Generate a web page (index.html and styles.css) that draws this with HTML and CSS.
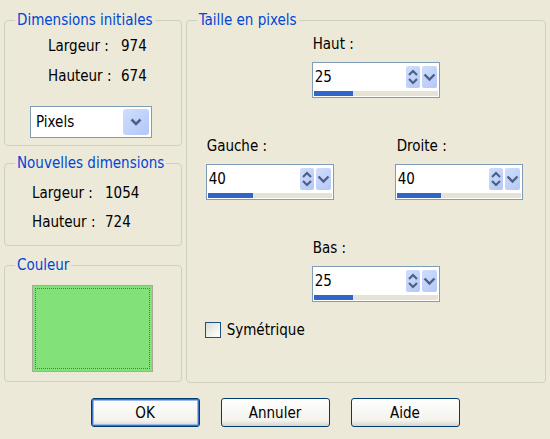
FILE: index.html
```html
<!DOCTYPE html>
<html lang="fr">
<head>
<meta charset="utf-8">
<title>Taille en pixels</title>
<link rel="stylesheet" href="styles.css">
</head>
<body>
<div class="dialog">
  <div class="main">
    <div class="left">
      <section class="group g-initial">
        <div class="group-title">Dimensions initiales</div>
        <div class="info info-initial">
          <span>Largeur :</span><span>974</span>
          <span>Hauteur :</span><span>674</span>
        </div>
        <div class="select">
          <span class="select-text">Pixels</span>
          <span class="select-btn"><svg width="26" height="26" viewBox="0 0 26 26"><path d="M8.5 10.5 L13 15 L17.5 10.5" fill="none" stroke="#4D6185" stroke-width="2.6"/></svg></span>
        </div>
      </section>
      <section class="group g-new">
        <div class="group-title">Nouvelles dimensions</div>
        <div class="info info-new">
          <span>Largeur :</span><span>1054</span>
          <span>Hauteur :</span><span>724</span>
        </div>
      </section>
      <section class="group g-color">
        <div class="group-title">Couleur</div>
        <div class="swatch"><div class="swatch-focus"></div></div>
      </section>
    </div>
    <section class="group g-size">
      <div class="group-title">Taille en pixels</div>
      <div class="row-center first">
        <div class="field">
          <div class="field-label">Haut :</div>
          <div class="spin">
            <div class="spin-top">
              <span class="spin-value">25</span>
              <span class="spin-btn"><svg width="14" height="22" viewBox="0 0 14 22"><path d="M3 9 L7 5 L11 9 M3 13 L7 17 L11 13" fill="none" stroke="#4D6185" stroke-width="2.2"/></svg></span>
              <span class="spin-btn wide"><svg width="15" height="22" viewBox="0 0 15 22"><path d="M2.5 8.5 L7.5 13.5 L12.5 8.5" fill="none" stroke="#4D6185" stroke-width="2.4"/></svg></span>
            </div>
            <div class="spin-strip"><div class="spin-fill" style="width:39px"></div></div>
          </div>
        </div>
      </div>
      <div class="row-sides">
        <div class="field">
          <div class="field-label">Gauche :</div>
          <div class="spin">
            <div class="spin-top">
              <span class="spin-value">40</span>
              <span class="spin-btn"><svg width="14" height="22" viewBox="0 0 14 22"><path d="M3 9 L7 5 L11 9 M3 13 L7 17 L11 13" fill="none" stroke="#4D6185" stroke-width="2.2"/></svg></span>
              <span class="spin-btn wide"><svg width="15" height="22" viewBox="0 0 15 22"><path d="M2.5 8.5 L7.5 13.5 L12.5 8.5" fill="none" stroke="#4D6185" stroke-width="2.4"/></svg></span>
            </div>
            <div class="spin-strip"><div class="spin-fill" style="width:45px"></div></div>
          </div>
        </div>
        <div class="field">
          <div class="field-label shifted">Droite :</div>
          <div class="spin">
            <div class="spin-top">
              <span class="spin-value">40</span>
              <span class="spin-btn"><svg width="14" height="22" viewBox="0 0 14 22"><path d="M3 9 L7 5 L11 9 M3 13 L7 17 L11 13" fill="none" stroke="#4D6185" stroke-width="2.2"/></svg></span>
              <span class="spin-btn wide"><svg width="15" height="22" viewBox="0 0 15 22"><path d="M2.5 8.5 L7.5 13.5 L12.5 8.5" fill="none" stroke="#4D6185" stroke-width="2.4"/></svg></span>
            </div>
            <div class="spin-strip"><div class="spin-fill" style="width:44px"></div></div>
          </div>
        </div>
      </div>
      <div class="row-center">
        <div class="field">
          <div class="field-label">Bas :</div>
          <div class="spin">
            <div class="spin-top">
              <span class="spin-value">25</span>
              <span class="spin-btn"><svg width="14" height="22" viewBox="0 0 14 22"><path d="M3 9 L7 5 L11 9 M3 13 L7 17 L11 13" fill="none" stroke="#4D6185" stroke-width="2.2"/></svg></span>
              <span class="spin-btn wide"><svg width="15" height="22" viewBox="0 0 15 22"><path d="M2.5 8.5 L7.5 13.5 L12.5 8.5" fill="none" stroke="#4D6185" stroke-width="2.4"/></svg></span>
            </div>
            <div class="spin-strip"><div class="spin-fill" style="width:39px"></div></div>
          </div>
        </div>
      </div>
      <label class="check-row"><span class="checkbox"></span><span>Symétrique</span></label>
    </section>
  </div>
  <div class="buttons">
    <button class="btn default">OK</button>
    <button class="btn">Annuler</button>
    <button class="btn">Aide</button>
  </div>
</div>
</body>
</html>
```

FILE: styles.css
```css
html, body {
  margin: 0;
  padding: 0;
}
body {
  width: 550px;
  height: 439px;
  background: #ECE9D8;
  font-family: "DejaVu Sans Condensed", "Liberation Sans", sans-serif;
  font-size: 15px;
  color: #000;
  overflow: hidden;
}
.dialog {
  padding-top: 20px;
}
.main {
  display: flex;
  gap: 4px;
  padding: 0 4px;
  align-items: flex-start;
}
.left {
  width: 178px;
  display: flex;
  flex-direction: column;
}
.group {
  box-sizing: border-box;
  border: 1px solid #D0D0BF;
  border-radius: 4px;
}
.group-title {
  margin: -10px 0 0 10px;
  padding: 0 2px;
  width: fit-content;
  line-height: 18px;
  background: #ECE9D8;
  color: #0046D5;
}
.g-initial { height: 126px; }
.g-new { height: 83px; margin-top: 17px; }
.g-color { height: 117px; margin-top: 19px; }
.g-size { width: 361px; height: 363px; }

.info {
  display: grid;
  grid-template-columns: 73px auto;
  line-height: 20px;
}
.info-initial {
  padding-left: 43px;
  margin-top: 7px;
  row-gap: 10px;
}
.info-new {
  padding-left: 27px;
  margin-top: 11px;
  row-gap: 9px;
}

.select {
  box-sizing: border-box;
  width: 122px;
  height: 32px;
  margin: 20px 0 0 25px;
  border: 1px solid #7F9DB9;
  background: #fff;
  display: flex;
  align-items: center;
  padding: 0 2px 0 5px;
}
.select-text { flex: 1; }
.select-btn {
  width: 26px;
  height: 26px;
  border-radius: 3px;
  background: linear-gradient(135deg, #D0DEFD, #B2C7F7);
  display: block;
}
.select-btn svg { display: block; }

.swatch {
  box-sizing: border-box;
  width: 121px;
  height: 87px;
  margin: 11px 0 0 27px;
  border: 1px solid #A8A89C;
  background: #82E279;
  padding: 2px;
  display: flex;
}
.swatch-focus {
  flex: 1;
  border: 1px dotted #7E5A8C;
}

.row-center { padding-left: 125px; margin-top: 38px; }
.row-center.first { margin-top: 5px; }
.row-sides {
  display: flex;
  gap: 61px;
  padding-left: 19px;
  margin-top: 38px;
}
.field { display: flex; flex-direction: column; }
.field-label {
  line-height: 20px;
  margin-bottom: 8px;
  padding-left: 1px;
}
.field-label.shifted { padding-left: 2px; }

.spin {
  box-sizing: border-box;
  width: 128px;
  height: 36px;
  border: 1px solid #7F9DB9;
  background: #fff;
  display: flex;
  flex-direction: column;
}
.spin-top {
  height: 28px;
  display: flex;
  align-items: center;
  gap: 2px;
  padding: 0 2px 0 2px;
}
.spin-value { flex: 1; line-height: 20px; }
.spin-btn {
  width: 14px;
  height: 22px;
  border-radius: 2px;
  background: linear-gradient(135deg, #D0DEFD, #B4C8F7);
  display: block;
}
.spin-btn.wide { width: 15px; }
.spin-btn svg { display: block; }
.spin-strip {
  height: 5px;
  margin: 0 1px;
  background: #E6E3D6;
  display: flex;
}
.spin-fill { background: #2F66C8; height: 100%; }

.check-row {
  display: flex;
  align-items: center;
  gap: 6px;
  margin-top: 18px;
  padding-left: 18px;
  line-height: 20px;
}
.checkbox {
  box-sizing: border-box;
  width: 16px;
  height: 16px;
  border: 1px solid #1C5180;
  background: linear-gradient(135deg, #DCDCD4, #F6F6F3 70%, #FFFFFF);
}

.buttons {
  display: flex;
  justify-content: center;
  gap: 21px;
  margin-top: 15px;
}
.btn {
  box-sizing: border-box;
  width: 109px;
  height: 29px;
  border: 1px solid #003C74;
  border-radius: 3px;
  background: linear-gradient(#FFFFFF, #F3F2EC 80%, #D9D4C7);
  font-family: inherit;
  font-size: 15px;
  color: #000;
  padding: 0;
}
.btn.default {
  box-shadow: inset 0 0 0 1px #3E6FC2, inset 0 0 0 2px #9DB9EB;
}
```
